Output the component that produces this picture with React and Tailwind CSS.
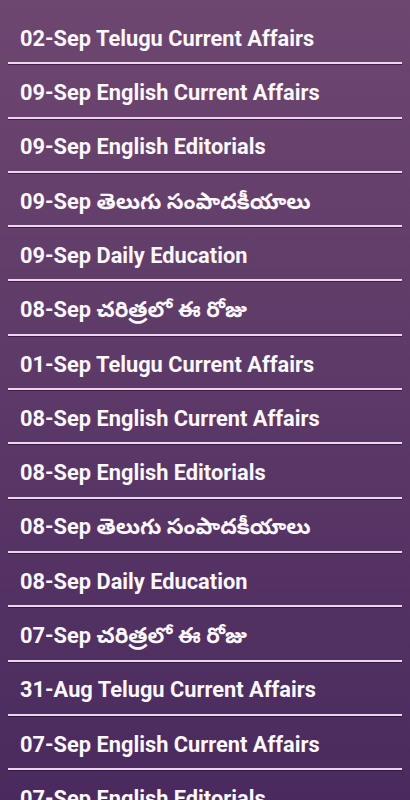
export default function App() {
  const items = [
    "02-Sep Telugu Current Affairs",
    "09-Sep English Current Affairs",
    "09-Sep English Editorials",
    "09-Sep తెలుగు సంపాదకీయాలు",
    "09-Sep Daily Education",
    "08-Sep చరిత్రలో ఈ రోజు",
    "01-Sep Telugu Current Affairs",
    "08-Sep English Current Affairs",
    "08-Sep English Editorials",
    "08-Sep తెలుగు సంపాదకీయాలు",
    "08-Sep Daily Education",
    "07-Sep చరిత్రలో ఈ రోజు",
    "31-Aug Telugu Current Affairs",
    "07-Sep English Current Affairs",
    "07-Sep English Editorials",
  ];
  return (
    <div
      className="w-[410px] h-[800px] overflow-hidden bg-gradient-to-b from-[#6e4770] to-[#4a2a5e] pt-[10px]"
      style={{ fontFamily: '"Roboto", "Noto Sans", "Noto Sans Telugu", sans-serif' }}
    >
      {items.map((t, i) => (
        <div key={i} className="h-[54.3px] flex flex-col">
          <div className="flex-1 flex items-center pl-[20px] pt-[5px] text-[#fbf7fb] font-bold text-[21.8px] leading-none whitespace-nowrap">
            {t}
          </div>
          <div className="mx-[8px] h-[2px] bg-[#ecd6ee] shadow-[0_1px_0_rgba(40,10,50,0.6)]" />
        </div>
      ))}
    </div>
  );
}
